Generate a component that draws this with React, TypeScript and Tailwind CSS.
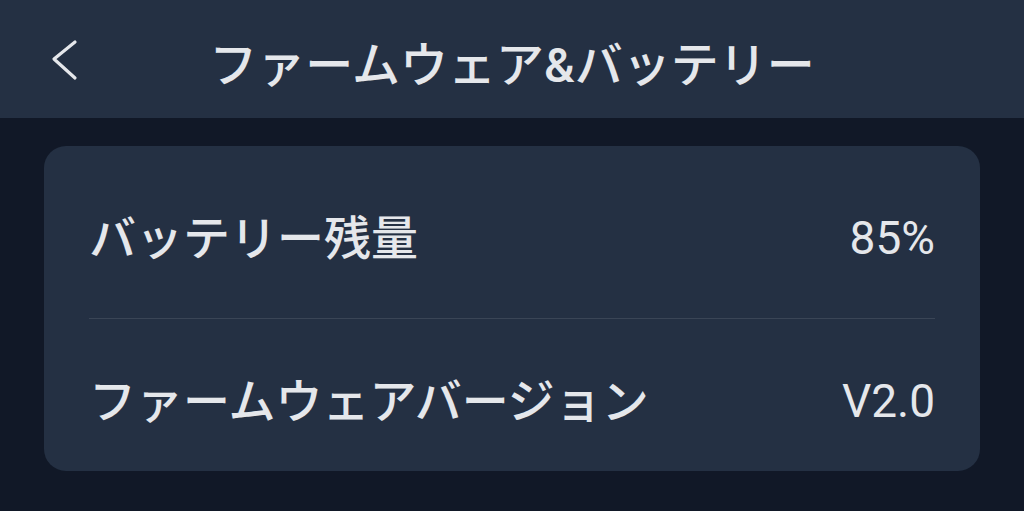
import React from "react";

export default function App() {
  const font = { fontFamily: 'Roboto, "Noto Sans CJK JP", sans-serif' };
  return (
    <div
      className="w-[1024px] h-[511px] bg-[#111827] text-[#e5e7eb] overflow-hidden flex flex-col"
      style={font}
    >
      <header className="h-[118px] bg-[#243043] flex items-center relative shrink-0">
        <div className="absolute left-[50px] top-[38px]">
          <svg width="28" height="44" viewBox="0 0 28 44" fill="none">
            <polyline
              points="25,4 4,21 25,40"
              stroke="#e5e7eb"
              strokeWidth="3.2"
              strokeLinecap="round"
              strokeLinejoin="round"
            />
          </svg>
        </div>
        <h1 className="flex-1 text-center text-[48px] font-medium leading-none pt-[14px]">
          ファームウェア&amp;バッテリー
        </h1>
      </header>
      <div className="px-[44px] pt-[28px]">
        <div className="bg-[#243043] rounded-[22px] px-[45px]">
          <div className="h-[173px] flex items-center justify-between border-b border-[#3a4556] pt-[12px]">
            <span className="text-[47px] font-medium leading-none">バッテリー残量</span>
            <span className="text-[46px] leading-none">85%</span>
          </div>
          <div className="h-[152px] flex items-center justify-between pt-[12px]">
            <span className="text-[47px] font-medium leading-none">ファームウェアバージョン</span>
            <span className="text-[46px] leading-none">V2.0</span>
          </div>
        </div>
      </div>
    </div>
  );
}
